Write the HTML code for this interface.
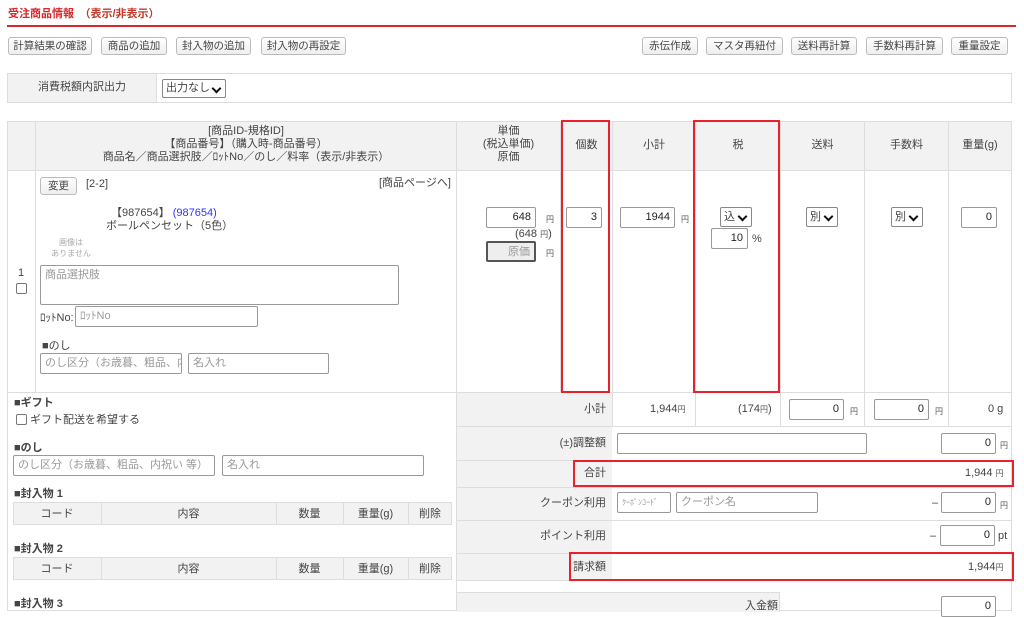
<!DOCTYPE html>
<html><head><meta charset="utf-8"><style>
*{box-sizing:border-box;margin:0;padding:0}
body{width:1024px;height:606px;overflow:hidden;background:#fff;font-family:"Liberation Sans","Noto Sans CJK JP",sans-serif;font-size:11px;line-height:13px;color:#444;position:relative}
.a{position:absolute}
.btn{position:absolute;top:37px;height:18px;border:1px solid #bbb;border-radius:3px;background:linear-gradient(#fff,#eee);font-size:10.5px;text-align:center;line-height:16px;color:#444}
.inp{position:absolute;border:1px solid #999;background:#fff;height:21px;font-size:11px;line-height:19px;padding:0 4px;text-align:right;color:#222;border-radius:2px}
.ph{color:#999;text-align:left}
.sel{position:absolute;border:1px solid #888;border-radius:2px;background:#fff;height:20px;font-size:11px;line-height:18px;padding-left:3px}
.sel:after{content:"";position:absolute;right:5px;top:5px;width:5px;height:5px;border-right:2px solid #111;border-bottom:2px solid #111;transform:rotate(45deg)}
.gray{background:#f2f2f2}
.vl{position:absolute;width:1px;background:#ddd}
.hl{position:absolute;height:1px;background:#ddd}
.red{position:absolute;border:2px solid #e8222d}
.c{text-align:center}
.y{font-size:8px;color:#555}
</style></head><body>
<div class="a" style="left:8px;top:8px;color:#d8262a;font-weight:bold;font-size:11px">受注商品情報　<span style="color:#c0392b">（表示/非表示）</span></div>
<div class="a" style="left:7px;top:25px;width:1009px;height:2px;background:#d8262a"></div>

<div class="btn" style="left:8px;width:84px">計算結果の確認</div>
<div class="btn" style="left:101px;width:66px">商品の追加</div>
<div class="btn" style="left:176px;width:75px">封入物の追加</div>
<div class="btn" style="left:261px;width:85px">封入物の再設定</div>
<div class="btn" style="left:642px;width:56px">赤伝作成</div>
<div class="btn" style="left:706px;width:77px">マスタ再紐付</div>
<div class="btn" style="left:791px;width:66px">送料再計算</div>
<div class="btn" style="left:866px;width:77px">手数料再計算</div>
<div class="btn" style="left:951px;width:57px">重量設定</div>

<div class="a" style="left:7px;top:73px;width:1005px;height:30px;border:1px solid #ddd"></div>
<div class="a gray" style="left:8px;top:74px;width:149px;height:28px;border-right:1px solid #ddd;line-height:27px;text-align:center">消費税額内訳出力</div>
<div class="sel" style="left:162px;top:79px;width:64px;height:19px;line-height:17px">出力なし</div>

<div class="a" style="left:7px;top:121px;width:1005px;height:490px;border:1px solid #ddd"></div>
<div class="a gray" style="left:8px;top:122px;width:1003px;height:49px;border-bottom:1px solid #ddd"></div>
<div class="vl" style="left:35px;top:121px;height:271px"></div>
<div class="vl" style="left:456px;top:121px;height:490px"></div>
<div class="vl" style="left:560px;top:121px;height:271px"></div>
<div class="vl" style="left:612px;top:121px;height:305px"></div>
<div class="vl" style="left:695px;top:121px;height:305px"></div>
<div class="vl" style="left:780px;top:121px;height:305px"></div>
<div class="vl" style="left:864px;top:121px;height:305px"></div>
<div class="vl" style="left:948px;top:121px;height:305px"></div>
<div class="hl" style="left:7px;top:392px;width:1005px"></div>
<div class="a c" style="left:36px;top:125px;width:420px;line-height:13px">[商品ID-規格ID]<br>【商品番号】（購入時-商品番号）<br>商品名／商品選択肢／ﾛｯﾄNo／のし／料率（表示/非表示）</div>
<div class="a c" style="left:457px;top:125px;width:103px;line-height:13px">単価<br>(税込単価)<br>原価</div>
<div class="a c" style="left:561px;top:139px;width:51px">個数</div>
<div class="a c" style="left:613px;top:139px;width:82px">小計</div>
<div class="a c" style="left:696px;top:139px;width:84px">税</div>
<div class="a c" style="left:781px;top:139px;width:83px">送料</div>
<div class="a c" style="left:865px;top:139px;width:83px">手数料</div>
<div class="a c" style="left:949px;top:139px;width:62px">重量(g)</div>

<div class="btn" style="left:40px;top:177px;width:37px">変更</div>
<div class="a" style="left:86px;top:178px">[2-2]</div>
<div class="a" style="left:379px;top:177px">[商品ページへ]</div>
<div class="a" style="left:111px;top:207px">【987654】 <span style="color:#33f">(987654)</span></div>
<div class="a" style="left:106px;top:220px">ボールペンセット（5色）</div>
<div class="a c" style="left:48px;top:237px;width:46px;font-size:8px;color:#aaa;line-height:11px">画像は<br>ありません</div>
<div class="a" style="left:18px;top:267px">1</div>
<div class="a" style="left:16px;top:283px;width:11px;height:11px;border:1px solid #777;border-radius:2px"></div>
<div class="inp ph" style="left:40px;top:265px;width:359px;height:40px;line-height:18px">商品選択肢</div>
<div class="a" style="left:40px;top:312px">ﾛｯﾄNo:</div>
<div class="inp ph" style="left:75px;top:306px;width:183px">ﾛｯﾄNo</div>
<div class="a" style="left:42px;top:340px">■のし</div>
<div class="inp ph" style="left:40px;top:353px;width:142px;overflow:hidden;white-space:nowrap">のし区分（お歳暮、粗品、内</div>
<div class="inp ph" style="left:188px;top:353px;width:141px">名入れ</div>

<div class="inp" style="left:486px;top:207px;width:50px">648</div><div class="a y" style="left:546px;top:213px">円</div>
<div class="a" style="left:515px;top:228px">(648 <span class="y">円</span>)</div>
<div class="inp ph" style="left:486px;top:241px;width:50px;background:#eee;border:2px solid #555;text-align:right">原価</div><div class="a y" style="left:546px;top:247px">円</div>
<div class="inp" style="left:566px;top:207px;width:36px">3</div>
<div class="inp" style="left:620px;top:207px;width:55px">1944</div><div class="a y" style="left:681px;top:213px">円</div>
<div class="sel" style="left:720px;top:207px;width:32px">込</div>
<div class="inp" style="left:711px;top:228px;width:37px">10</div><div class="a" style="left:752px;top:233px">%</div>
<div class="sel" style="left:806px;top:207px;width:32px">別</div>
<div class="sel" style="left:891px;top:207px;width:32px">別</div>
<div class="inp" style="left:961px;top:207px;width:36px">0</div>

<div class="a" style="left:14px;top:397px;font-weight:bold">■ギフト</div>
<div class="a" style="left:16px;top:414px;width:11px;height:11px;border:1px solid #777;border-radius:2px"></div>
<div class="a" style="left:30px;top:414px">ギフト配送を希望する</div>
<div class="a" style="left:14px;top:442px;font-weight:bold">■のし</div>
<div class="inp ph" style="left:13px;top:455px;width:202px">のし区分（お歳暮、粗品、内祝い 等）</div>
<div class="inp ph" style="left:222px;top:455px;width:202px">名入れ</div>
<div class="a" style="left:14px;top:488px;font-weight:bold">■封入物 1</div>
<div class="a gray" style="left:13px;top:502px;width:439px;height:23px;border:1px solid #ddd"></div>
<div class="a gray" style="left:13px;top:557px;width:439px;height:23px;border:1px solid #ddd"></div>
<div class="vl" style="left:101px;top:502px;height:23px"></div><div class="vl" style="left:276px;top:502px;height:23px"></div><div class="vl" style="left:343px;top:502px;height:23px"></div><div class="vl" style="left:408px;top:502px;height:23px"></div>
<div class="vl" style="left:101px;top:557px;height:23px"></div><div class="vl" style="left:276px;top:557px;height:23px"></div><div class="vl" style="left:343px;top:557px;height:23px"></div><div class="vl" style="left:408px;top:557px;height:23px"></div>
<div class="a c" style="left:13px;top:508px;width:88px">コード</div><div class="a c" style="left:101px;top:508px;width:175px">内容</div><div class="a c" style="left:276px;top:508px;width:67px">数量</div><div class="a c" style="left:343px;top:508px;width:65px">重量(g)</div><div class="a c" style="left:408px;top:508px;width:44px">削除</div>
<div class="a c" style="left:13px;top:563px;width:88px">コード</div><div class="a c" style="left:101px;top:563px;width:175px">内容</div><div class="a c" style="left:276px;top:563px;width:67px">数量</div><div class="a c" style="left:343px;top:563px;width:65px">重量(g)</div><div class="a c" style="left:408px;top:563px;width:44px">削除</div>
<div class="a" style="left:14px;top:543px;font-weight:bold">■封入物 2</div>
<div class="a" style="left:14px;top:598px;font-weight:bold">■封入物 3</div>

<div class="a gray" style="left:457px;top:393px;width:155px;height:187px"></div>
<div class="hl" style="left:456px;top:426px;width:556px"></div>
<div class="hl" style="left:456px;top:460px;width:556px"></div>
<div class="hl" style="left:456px;top:487px;width:556px"></div>
<div class="hl" style="left:456px;top:520px;width:556px"></div>
<div class="hl" style="left:456px;top:553px;width:556px"></div>
<div class="hl" style="left:456px;top:580px;width:556px"></div>
<div class="a gray" style="left:457px;top:592px;width:322px;height:20px;border-top:1px solid #ddd"></div>
<div class="vl" style="left:779px;top:592px;height:20px"></div>
<div class="a" style="right:418px;top:403px">小計</div>
<div class="a" style="right:418px;top:437px">(±)調整額</div>
<div class="a" style="right:418px;top:467px">合計</div>
<div class="a" style="right:418px;top:497px">クーポン利用</div>
<div class="a" style="right:418px;top:530px">ポイント利用</div>
<div class="a" style="right:418px;top:561px">請求額</div>
<div class="a" style="left:650px;top:403px">1,944<span class="y">円</span></div>
<div class="a" style="left:738px;top:403px">(174<span class="y">円</span>)</div>
<div class="inp" style="left:789px;top:399px;width:55px">0</div><div class="a y" style="left:850px;top:405px">円</div>
<div class="inp" style="left:874px;top:399px;width:55px">0</div><div class="a y" style="left:935px;top:405px">円</div>
<div class="a" style="left:988px;top:403px">0 g</div>
<div class="inp" style="left:617px;top:433px;width:250px"></div>
<div class="inp" style="left:941px;top:433px;width:55px">0</div><div class="a y" style="left:1000px;top:439px">円</div>
<div class="a" style="left:965px;top:467px">1,944 <span class="y">円</span></div>
<div class="inp ph" style="left:617px;top:492px;width:54px;font-size:8px">ｸｰﾎﾟﾝｺｰﾄﾞ</div>
<div class="inp ph" style="left:676px;top:492px;width:142px">クーポン名</div>
<div class="a" style="left:932px;top:497px">–</div>
<div class="inp" style="left:941px;top:492px;width:55px">0</div><div class="a y" style="left:1000px;top:499px">円</div>
<div class="a" style="left:930px;top:530px">–</div>
<div class="inp" style="left:940px;top:525px;width:55px">0</div><div class="a" style="left:998px;top:530px">pt</div>
<div class="a" style="left:968px;top:561px">1,944<span class="y">円</span></div>
<div class="a" style="left:745px;top:600px">入金額</div>
<div class="inp" style="left:941px;top:596px;width:55px">0</div>

<div class="red" style="left:561px;top:120px;width:49px;height:273px"></div>
<div class="red" style="left:693px;top:120px;width:87px;height:273px"></div>
<div class="red" style="left:573px;top:460px;width:441px;height:27px"></div>
<div class="red" style="left:569px;top:552px;width:445px;height:29px"></div>
</body></html>
